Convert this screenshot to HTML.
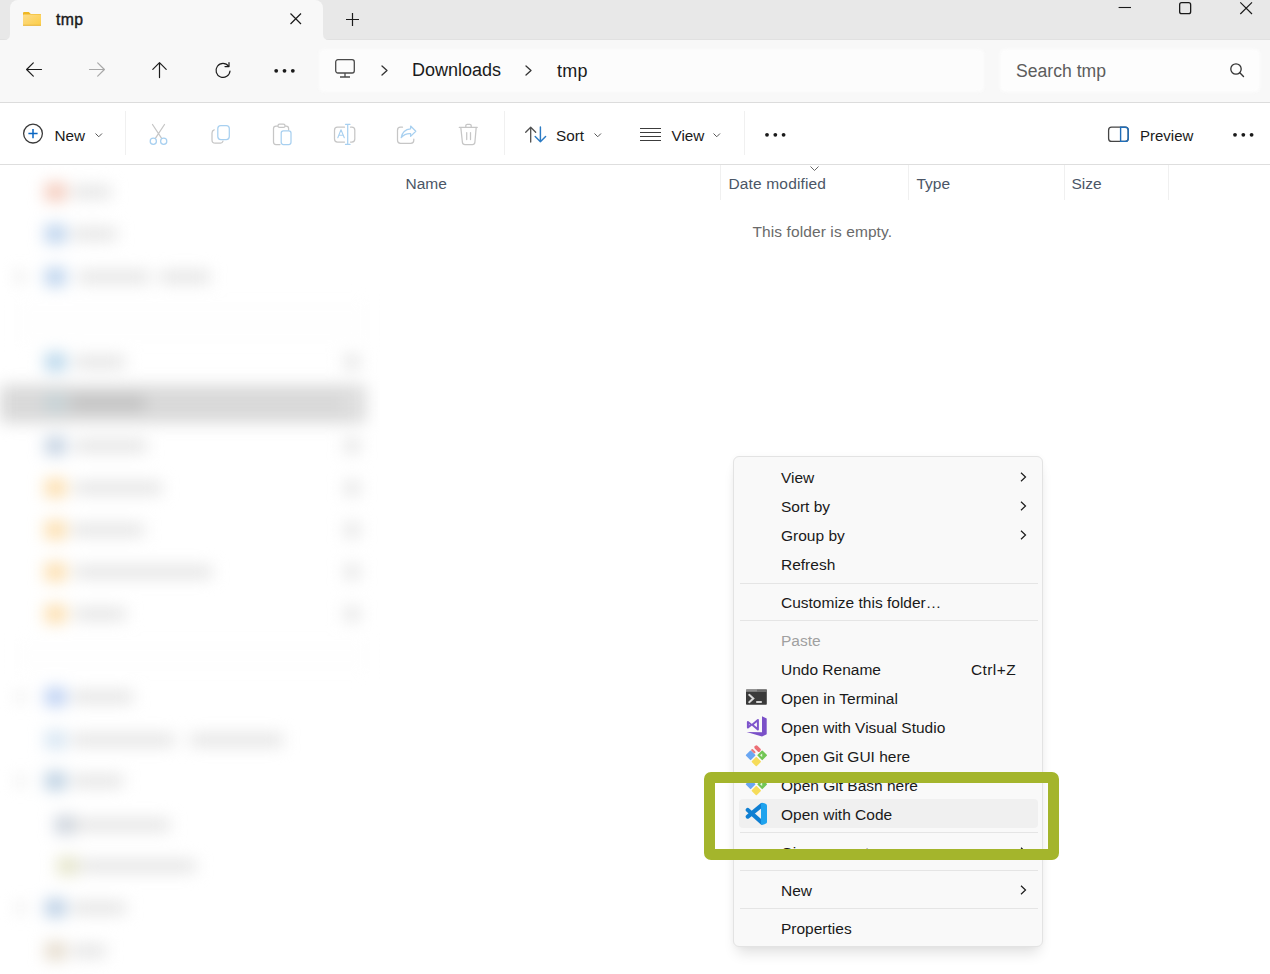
<!DOCTYPE html>
<html><head><meta charset="utf-8"><style>
*{margin:0;padding:0;box-sizing:border-box}
html,body{width:1270px;height:974px;overflow:hidden;background:#fff;font-family:"Liberation Sans",sans-serif;color:#1a1a1a}
.a{position:absolute}
.t{position:absolute;white-space:nowrap;line-height:1}
svg{position:absolute;overflow:visible}
</style></head><body>
<div class="a" style="left:0;top:0;width:1270px;height:40px;background:#e8e8e8"></div>
<div class="a" style="left:0;top:39px;width:1270px;height:1px;background:#e1e1e1"></div>
<div class="a" style="left:10px;top:0;width:313px;height:40px;background:#f8f8f8;border-radius:8px 8px 0 0"></div>
<svg width="1270" height="60" style="left:0;top:0"><path d="M4 40 Q10 40 10 34 L10 40 Z M323 34 Q323 40 329 40 L323 40 Z" fill="#f8f8f8"/></svg>
<svg width="1270" height="974" style="left:0;top:0"><defs><linearGradient id="fg" x1="0" y1="0" x2="1" y2="1"><stop offset="0" stop-color="#fddc8a"/><stop offset="1" stop-color="#fccd45"/></linearGradient></defs><path d="M23 13 Q23 11.9 24.1 11.9 L28.8 11.9 L30.8 14 L40.2 14 Q41 14 41 14.8 L41 16.5 L23 16.5 Z" fill="#efb722"/><rect x="23" y="14.6" width="18" height="11.2" rx="0.8" fill="url(#fg)"/><rect x="23" y="24.7" width="18" height="1.1" fill="#e9b848"/></svg>
<div class="t" style="left:56px;top:12.42px;font-size:15.8px;color:#1a1a1a;-webkit-text-stroke:0.4px #1a1a1a;letter-spacing:0.3px;">tmp</div>

<svg width="12" height="12" style="left:289.5px;top:13px"><path d="M0.5 0.5 L11 11 M11 0.5 L0.5 11" stroke="#1a1a1a" stroke-width="1.2" fill="none"/></svg>
<svg width="14" height="14" style="left:346px;top:13px"><path d="M6.5 0 L6.5 13 M0 6.5 L13 6.5" stroke="#1a1a1a" stroke-width="1.2" fill="none"/></svg>
<svg width="1270" height="974" style="left:0;top:0"><path d="M1118.6 7.5 L1131 7.5" stroke="#1a1a1a" stroke-width="1.1"/></svg>
<svg width="14" height="14" style="left:1179px;top:2px"><rect x="0.65" y="0.65" width="11" height="11" rx="2" stroke="#1a1a1a" stroke-width="1.3" fill="none"/></svg>
<svg width="14" height="14" style="left:1240px;top:2px"><path d="M0.3 0.3 L12 12 M12 0.3 L0.3 12" stroke="#1a1a1a" stroke-width="1.15" fill="none"/></svg>
<div class="a" style="left:0;top:40px;width:1270px;height:62px;background:#f8f8f8"></div>
<div class="a" style="left:0;top:102px;width:1270px;height:1px;background:#dcdcdc"></div>
<div class="a" style="left:319px;top:49px;width:665px;height:43px;background:#fcfcfc;border-radius:5px;filter:blur(1.5px)"></div>
<div class="a" style="left:1000px;top:49px;width:260px;height:43px;background:#fdfdfd;border-radius:5px;filter:blur(1.5px)"></div>
<svg width="20" height="20" style="left:26px;top:62px"><path d="M0.6 7.5 L15.5 7.5 M7.3 0.8 L0.6 7.5 L7.3 14.2" stroke="#1c1c1c" stroke-width="1.2" fill="none" stroke-linecap="round" stroke-linejoin="round"/></svg>
<svg width="20" height="20" style="left:89px;top:62px"><path d="M15.4 7.5 L0.5 7.5 M8.7 0.8 L15.4 7.5 L8.7 14.2" stroke="#a8a8a8" stroke-width="1.2" fill="none" stroke-linecap="round" stroke-linejoin="round"/></svg>
<svg width="20" height="20" style="left:152px;top:62px"><path d="M7.5 0.6 L7.5 15.6 M0.8 7.3 L7.5 0.6 L14.2 7.3" stroke="#1c1c1c" stroke-width="1.2" fill="none" stroke-linecap="round" stroke-linejoin="round"/></svg>
<svg width="20" height="20" style="left:215px;top:62px"><path d="M13.6 4.2 A7 7 0 1 0 15 9" stroke="#1c1c1c" stroke-width="1.2" fill="none" stroke-linecap="round" stroke-linejoin="round"/><path d="M14 0.6 L14 4.6 L10 4.6" stroke="#1c1c1c" stroke-width="1.2" fill="none" stroke-linecap="round" stroke-linejoin="round"/></svg>
<svg width="24" height="6" style="left:273px;top:68px"><circle cx="3.2" cy="2.8" r="1.9" fill="#1a1a1a"/><circle cx="11.5" cy="2.8" r="1.9" fill="#1a1a1a"/><circle cx="19.8" cy="2.8" r="1.9" fill="#1a1a1a"/></svg>
<svg width="22" height="22" style="left:335px;top:59px"><rect x="0.7" y="0.7" width="18.6" height="13.3" rx="2.2" stroke="#4a4a4a" stroke-width="1.3" fill="none"/><path d="M10 14 L10 17.5 M5 18 L15 18" stroke="#4a4a4a" stroke-width="1.3" fill="none"/></svg>
<svg width="10" height="12" style="left:381px;top:65px"><path d="M1 1 L6 5.5 L1 10" stroke="#333" stroke-width="1.3" fill="none" stroke-linecap="round" stroke-linejoin="round"/></svg>
<div class="t" style="left:412px;top:60.96px;font-size:18px;color:#1a1a1a;">Downloads</div>

<svg width="10" height="12" style="left:525px;top:65px"><path d="M1 1 L6 5.5 L1 10" stroke="#333" stroke-width="1.3" fill="none" stroke-linecap="round" stroke-linejoin="round"/></svg>
<div class="t" style="left:557px;top:61.96px;font-size:18px;color:#1a1a1a;letter-spacing:0.3px;">tmp</div>

<div class="t" style="left:1016px;top:63.10px;font-size:17.6px;color:#5c5c5c;">Search tmp</div>

<svg width="16" height="16" style="left:1229.5px;top:62.5px"><circle cx="6" cy="6" r="5.2" stroke="#333" stroke-width="1.3" fill="none"/><path d="M9.8 9.8 L13.5 13.5" stroke="#333" stroke-width="1.4" stroke-linecap="round"/></svg>
<div class="a" style="left:0;top:164px;width:1270px;height:1px;background:#dedede"></div>
<div class="a" style="left:125px;top:111px;width:1px;height:44px;background:#f0f0f0"></div>
<div class="a" style="left:503.5px;top:111px;width:1px;height:44px;background:#f0f0f0"></div>
<div class="a" style="left:744px;top:111px;width:1px;height:44px;background:#f0f0f0"></div>
<svg width="22" height="22" style="left:22px;top:123px"><circle cx="11" cy="10.6" r="9.4" stroke="#3a3a3a" stroke-width="1.3" fill="none"/><path d="M11 6 L11 15.2 M6.4 10.6 L15.6 10.6" stroke="#0a66c2" stroke-width="1.5"/></svg>
<div class="t" style="left:54.5px;top:128.05px;font-size:15.3px;">New</div>

<svg width="10" height="6" style="left:95px;top:133px"><path d="M0.5 0.5 L3.75 3.75 L7 0.5" stroke="#555" stroke-width="1" fill="none"/></svg>
<svg width="1270" height="974" style="left:0;top:0"><path d="M152.5 124.5 L161.8 138.6 M164.5 124.5 L155.2 138.6" stroke="#c6c6c6" stroke-width="1.25" fill="none" stroke-linecap="round" stroke-linejoin="round"/><circle cx="153.3" cy="141.2" r="3.1" stroke="#a8d0f0" stroke-width="1.25" fill="none" stroke-linecap="round" stroke-linejoin="round"/><circle cx="163.7" cy="141.2" r="3.1" stroke="#a8d0f0" stroke-width="1.25" fill="none" stroke-linecap="round" stroke-linejoin="round"/><path d="M214.2 129.8 Q212 130.5 212 133 L212 140 Q212 143.2 215.2 143.2 L220.5 143.2 Q222.5 143.2 223 141.2" stroke="#c6c6c6" stroke-width="1.25" fill="none" stroke-linecap="round" stroke-linejoin="round"/><rect x="217.8" y="125.5" width="11.5" height="14" rx="3" stroke="#a8d0f0" stroke-width="1.25" fill="none" stroke-linecap="round" stroke-linejoin="round"/><path d="M277.5 126 L276 126 Q273.5 126 273.5 128.5 L273.5 142 Q273.5 144.5 276 144.5 L280 144.5 M285.5 126 L286.2 126 Q288.6 126 288.6 128.5 L288.6 130" stroke="#c6c6c6" stroke-width="1.25" fill="none" stroke-linecap="round" stroke-linejoin="round"/><rect x="278" y="124.2" width="7" height="3.2" rx="1.5" stroke="#c6c6c6" stroke-width="1.25" fill="none" stroke-linecap="round" stroke-linejoin="round"/><rect x="281.2" y="130.8" width="9.8" height="13.7" rx="2.2" stroke="#a8d0f0" stroke-width="1.25" fill="none" stroke-linecap="round" stroke-linejoin="round"/><path d="M344.5 127.2 L337.5 127.2 Q334.5 127.2 334.5 130.2 L334.5 139 Q334.5 142 337.5 142 L344.5 142 M350.5 127.2 L351.8 127.2 Q354.8 127.2 354.8 130.2 L354.8 139 Q354.8 142 351.8 142 L350.5 142" stroke="#c6c6c6" stroke-width="1.25" fill="none" stroke-linecap="round" stroke-linejoin="round"/><path d="M347.7 124.3 L347.7 144.4 M345.5 124.3 L350 124.3 M345.5 144.4 L350 144.4" stroke="#a8d0f0" stroke-width="1.25" fill="none" stroke-linecap="round" stroke-linejoin="round"/><path d="M337.8 137.8 L341 129.8 L344.3 137.8 M339 135.3 L343.1 135.3" stroke="#a8d0f0" stroke-width="1.1" fill="none" stroke-linecap="round" stroke-linejoin="round"/><path d="M402.5 127.2 L400.5 127.2 Q397.5 127.2 397.5 130.2 L397.5 140.3 Q397.5 143.3 400.5 143.3 L410.8 143.3 Q413.8 143.3 413.8 140.3 L413.8 139" stroke="#c6c6c6" stroke-width="1.25" fill="none" stroke-linecap="round" stroke-linejoin="round"/><path d="M410.6 126 L415.8 131.3 L410.6 136.4 L410.6 133.6 Q404.5 133.3 401.2 137.7 Q402.5 129.5 410.6 128.8 Z" stroke="#a8d0f0" stroke-width="1.25" fill="none" stroke-linecap="round" stroke-linejoin="round"/><path d="M459.3 127.4 L477.2 127.4 M465.8 127.4 L465.8 125.6 Q465.8 124.3 467.3 124.3 L469.7 124.3 Q471.2 124.3 471.2 125.6 L471.2 127.4 M460.8 127.4 L462.4 142.3 Q462.7 144.5 465 144.5 L472.4 144.5 Q474.6 144.5 474.9 142.3 L476.2 127.4 M466.7 132.6 L466.7 139.6 M470.5 132.6 L470.5 139.6" stroke="#c6c6c6" stroke-width="1.25" fill="none" stroke-linecap="round" stroke-linejoin="round"/><path d="M530.7 142 L530.7 127.3 M525.7 132.2 L530.7 127.2 L535.7 132.2" stroke="#505050" stroke-width="1.3" fill="none" stroke-linecap="round" stroke-linejoin="round"/><path d="M540.4 127 L540.4 141.8 M535.2 136.6 L540.4 141.8 L545.6 136.6" stroke="#2b7bc4" stroke-width="1.45" fill="none" stroke-linecap="round" stroke-linejoin="round"/><path d="M640 128.5 L661 128.5 M640 132.5 L661 132.5 M640 136.5 L661 136.5 M640 140.5 L661 140.5" stroke="#3c3c3c" stroke-width="1.2"/></svg>
<div class="t" style="left:556px;top:128.05px;font-size:15.3px;">Sort</div>

<svg width="10" height="6" style="left:594px;top:133px"><path d="M0.5 0.5 L3.75 3.75 L7 0.5" stroke="#555" stroke-width="1" fill="none"/></svg>
<div class="t" style="left:671.5px;top:128.05px;font-size:15.3px;">View</div>

<svg width="10" height="6" style="left:713px;top:133px"><path d="M0.5 0.5 L3.75 3.75 L7 0.5" stroke="#555" stroke-width="1" fill="none"/></svg>
<svg width="24" height="6" style="left:764px;top:132px"><circle cx="3" cy="2.8" r="1.9" fill="#1a1a1a"/><circle cx="11.3" cy="2.8" r="1.9" fill="#1a1a1a"/><circle cx="19.6" cy="2.8" r="1.9" fill="#1a1a1a"/></svg>
<svg width="1270" height="974" style="left:0;top:0"><rect x="1108.6" y="127.2" width="19.6" height="14.2" rx="3" stroke="#444" stroke-width="1.3" fill="none"/><path d="M1120.6 127.2 L1125.2 127.2 Q1128.2 127.2 1128.2 130.2 L1128.2 138.4 Q1128.2 141.4 1125.2 141.4 L1120.6 141.4 Z" stroke="#1f6db8" stroke-width="1.4" fill="none"/></svg>
<div class="t" style="left:1140px;top:128.30px;font-size:15.0px;">Preview</div>

<svg width="24" height="6" style="left:1232px;top:132px"><circle cx="3" cy="2.8" r="1.9" fill="#1a1a1a"/><circle cx="11.3" cy="2.8" r="1.9" fill="#1a1a1a"/><circle cx="19.6" cy="2.8" r="1.9" fill="#1a1a1a"/></svg>
<div class="t" style="left:405.5px;top:175.88px;font-size:15.5px;color:#4b5666;">Name</div>

<div class="t" style="left:728.5px;top:175.88px;font-size:15.5px;color:#4b5666;letter-spacing:0.15px;">Date modified</div>

<div class="t" style="left:916.5px;top:175.88px;font-size:15.5px;color:#4b5666;">Type</div>

<div class="t" style="left:1071.5px;top:175.88px;font-size:15.5px;color:#4b5666;">Size</div>

<div class="a" style="left:720px;top:165px;width:1px;height:35px;background:#f0f0f0"></div>
<div class="a" style="left:908px;top:165px;width:1px;height:35px;background:#f0f0f0"></div>
<div class="a" style="left:1064px;top:165px;width:1px;height:35px;background:#f0f0f0"></div>
<div class="a" style="left:1168px;top:165px;width:1px;height:35px;background:#f0f0f0"></div>
<svg width="12" height="6" style="left:810px;top:166px"><path d="M0.5 0.5 L4.5 4.5 L8.5 0.5" stroke="#666" stroke-width="1" fill="none"/></svg>
<div class="t" style="left:752.5px;top:224.48px;font-size:15.5px;color:#6a6a6a;letter-spacing:0.1px;">This folder is empty.</div>

<div class="a" style="left:0;top:166px;width:380px;height:808px;overflow:hidden"><div class="a" style="left:0;top:-166px;width:380px;height:974px;filter:blur(8px)"><div class="a" style="left:0px;top:385px;width:366px;height:38px;background:#d9d9d9;border-radius:4px"></div><div class="a" style="left:14px;top:302px;width:356px;height:42px;background:#fefefe"></div><div class="a" style="left:14px;top:641px;width:356px;height:30px;background:#fefefe"></div><div class="a" style="left:45px;top:183px;width:21px;height:18px;border-radius:3px;background:#f4c8b8"></div><div class="a" style="left:72px;top:186px;width:39px;height:12px;background:#e2e2e2;border-radius:2px"></div><div class="a" style="left:45px;top:225px;width:21px;height:18px;border-radius:3px;background:#b8d0ec"></div><div class="a" style="left:72px;top:228px;width:45px;height:12px;background:#e2e2e2;border-radius:2px"></div><div class="a" style="left:45px;top:268px;width:21px;height:18px;border-radius:3px;background:#b8d0ec"></div><div class="a" style="left:78px;top:271px;width:72px;height:12px;background:#e2e2e2;border-radius:2px"></div><div class="a" style="left:160px;top:271px;width:50px;height:12px;background:#e2e2e2"></div><div class="a" style="left:16px;top:272px;width:8px;height:10px;background:#e0e0e0"></div><div class="a" style="left:45px;top:353px;width:21px;height:18px;border-radius:3px;background:#b4d4ea"></div><div class="a" style="left:74px;top:356px;width:51px;height:12px;background:#e2e2e2;border-radius:2px"></div><div class="a" style="left:344px;top:355px;width:16px;height:14px;background:#e4e4e4"></div><div class="a" style="left:45px;top:394px;width:21px;height:18px;border-radius:3px;background:#c4d2d6"></div><div class="a" style="left:70px;top:397px;width:75px;height:12px;background:#bdbdbd;border-radius:2px"></div><div class="a" style="left:344px;top:396px;width:16px;height:14px;background:#e4e4e4"></div><div class="a" style="left:45px;top:437px;width:21px;height:18px;border-radius:3px;background:#c0cfe0"></div><div class="a" style="left:74px;top:440px;width:73px;height:12px;background:#e2e2e2;border-radius:2px"></div><div class="a" style="left:344px;top:439px;width:16px;height:14px;background:#e4e4e4"></div><div class="a" style="left:45px;top:479px;width:21px;height:18px;border-radius:3px;background:#fcdca8"></div><div class="a" style="left:74px;top:482px;width:88px;height:12px;background:#e2e2e2;border-radius:2px"></div><div class="a" style="left:344px;top:481px;width:16px;height:14px;background:#e4e4e4"></div><div class="a" style="left:45px;top:521px;width:21px;height:18px;border-radius:3px;background:#fcdca8"></div><div class="a" style="left:72px;top:524px;width:72px;height:12px;background:#e2e2e2;border-radius:2px"></div><div class="a" style="left:344px;top:523px;width:16px;height:14px;background:#e4e4e4"></div><div class="a" style="left:45px;top:563px;width:21px;height:18px;border-radius:3px;background:#fcdca8"></div><div class="a" style="left:74px;top:566px;width:138px;height:12px;background:#e2e2e2;border-radius:2px"></div><div class="a" style="left:344px;top:565px;width:16px;height:14px;background:#e4e4e4"></div><div class="a" style="left:45px;top:605px;width:21px;height:18px;border-radius:3px;background:#fcdca8"></div><div class="a" style="left:74px;top:608px;width:52px;height:12px;background:#e2e2e2;border-radius:2px"></div><div class="a" style="left:344px;top:607px;width:16px;height:14px;background:#e4e4e4"></div><div class="a" style="left:45px;top:688px;width:21px;height:18px;border-radius:3px;background:#b8cdf2"></div><div class="a" style="left:72px;top:691px;width:61px;height:12px;background:#e2e2e2;border-radius:2px"></div><div class="a" style="left:17px;top:692px;width:7px;height:10px;background:#e2e2e2"></div><div class="a" style="left:17px;top:776px;width:7px;height:10px;background:#e2e2e2"></div><div class="a" style="left:17px;top:903px;width:7px;height:10px;background:#e2e2e2"></div><div class="a" style="left:45px;top:731px;width:21px;height:18px;border-radius:3px;background:#d4e4f2"></div><div class="a" style="left:72px;top:734px;width:103px;height:12px;background:#e2e2e2;border-radius:2px"></div><div class="a" style="left:190px;top:734px;width:93px;height:12px;background:#e2e2e2"></div><div class="a" style="left:45px;top:772px;width:21px;height:18px;border-radius:3px;background:#b8cde0"></div><div class="a" style="left:72px;top:775px;width:51px;height:12px;background:#e2e2e2;border-radius:2px"></div><div class="a" style="left:55px;top:816px;width:21px;height:18px;border-radius:3px;background:#c8d0da"></div><div class="a" style="left:72px;top:819px;width:98px;height:12px;background:#e2e2e2;border-radius:2px"></div><div class="a" style="left:57px;top:857px;width:21px;height:18px;border-radius:3px;background:#e4e4c8"></div><div class="a" style="left:80px;top:860px;width:116px;height:12px;background:#e2e2e2;border-radius:2px"></div><div class="a" style="left:45px;top:899px;width:21px;height:18px;border-radius:3px;background:#b8cde4"></div><div class="a" style="left:72px;top:902px;width:54px;height:12px;background:#e2e2e2;border-radius:2px"></div><div class="a" style="left:45px;top:942px;width:21px;height:18px;border-radius:3px;background:#e4dacb"></div><div class="a" style="left:72px;top:945px;width:34px;height:12px;background:#e2e2e2;border-radius:2px"></div></div></div>
<div class="a" style="left:733px;top:456px;width:310px;height:491px;background:#f9f9f9;border:1px solid #e3e3e3;border-radius:6px;box-shadow:0 10px 14px -4px rgba(0,0,0,0.12),0 0 6px rgba(0,0,0,0.03)"></div>
<div class="t" style="left:781px;top:470.18px;font-size:15.5px;color:#1a1a1a;">View</div>

<svg width="8" height="11" style="left:1019.5px;top:471.5px"><path d="M1 0.8 L5.5 5 L1 9.2" stroke="#1a1a1a" stroke-width="1.2" fill="none"/></svg>
<div class="t" style="left:781px;top:499.18px;font-size:15.5px;color:#1a1a1a;">Sort by</div>

<svg width="8" height="11" style="left:1019.5px;top:500.5px"><path d="M1 0.8 L5.5 5 L1 9.2" stroke="#1a1a1a" stroke-width="1.2" fill="none"/></svg>
<div class="t" style="left:781px;top:528.18px;font-size:15.5px;color:#1a1a1a;">Group by</div>

<svg width="8" height="11" style="left:1019.5px;top:529.5px"><path d="M1 0.8 L5.5 5 L1 9.2" stroke="#1a1a1a" stroke-width="1.2" fill="none"/></svg>
<div class="t" style="left:781px;top:557.48px;font-size:15.5px;color:#1a1a1a;">Refresh</div>

<div class="a" style="left:740px;top:582.5px;width:298px;height:1px;background:#e5e5e5"></div>
<div class="t" style="left:781px;top:595.18px;font-size:15.5px;color:#1a1a1a;">Customize this folder&hellip;</div>

<div class="a" style="left:740px;top:620px;width:298px;height:1px;background:#e5e5e5"></div>
<div class="t" style="left:781px;top:632.98px;font-size:15.5px;color:#a0a0a0;">Paste</div>

<div class="t" style="left:781px;top:662.08px;font-size:15.5px;color:#1a1a1a;">Undo Rename</div>

<div class="t" style="left:971px;top:662.08px;font-size:15.5px;letter-spacing:0.4px;">Ctrl+Z</div>

<div class="t" style="left:781px;top:691.08px;font-size:15.5px;color:#1a1a1a;">Open in Terminal</div>

<div class="t" style="left:781px;top:720.08px;font-size:15.5px;color:#1a1a1a;">Open with Visual Studio</div>

<div class="t" style="left:781px;top:749.08px;font-size:15.5px;color:#1a1a1a;">Open Git GUI here</div>

<div class="t" style="left:781px;top:778.08px;font-size:15.5px;color:#1a1a1a;">Open Git Bash here</div>

<div class="a" style="left:738.5px;top:799px;width:299px;height:29px;background:#f0f0f0;border-radius:4px"></div>
<div class="t" style="left:781px;top:807.18px;font-size:15.5px;color:#1a1a1a;">Open with Code</div>

<div class="a" style="left:740px;top:831.5px;width:298px;height:1px;background:#e5e5e5"></div>
<div class="t" style="left:781px;top:845.18px;font-size:15.5px;color:#1a1a1a;letter-spacing:-0.4px;">Give access to</div>

<svg width="8" height="11" style="left:1019.5px;top:846.5px"><path d="M1 0.8 L5.5 5 L1 9.2" stroke="#1a1a1a" stroke-width="1.2" fill="none"/></svg>
<div class="a" style="left:740px;top:870px;width:298px;height:1px;background:#e5e5e5"></div>
<div class="t" style="left:781px;top:883.38px;font-size:15.5px;color:#1a1a1a;">New</div>

<svg width="8" height="11" style="left:1019.5px;top:884.5px"><path d="M1 0.8 L5.5 5 L1 9.2" stroke="#1a1a1a" stroke-width="1.2" fill="none"/></svg>
<div class="a" style="left:740px;top:908px;width:298px;height:1px;background:#e5e5e5"></div>
<div class="t" style="left:781px;top:921.48px;font-size:15.5px;color:#1a1a1a;">Properties</div>

<svg width="1270" height="974" style="left:0;top:0"><rect x="746" y="689.6" width="20.8" height="15.2" rx="0.8" fill="#3a3a3a"/><rect x="746" y="689.6" width="20.8" height="2.2" fill="#8a8a8a"/><rect x="757" y="689.6" width="9.8" height="2.2" fill="#6a6a6a"/><path d="M749.2 694.8 L753.3 698.5 L749.2 702.2" stroke="#d8d8d8" stroke-width="2" fill="none" stroke-linecap="round"/><path d="M756.2 702 L761.8 702" stroke="#e8e8e8" stroke-width="1.8"/></svg>
<svg width="1270" height="974" style="left:0;top:0"><path d="M762 716.3 L766.7 718.6 L766.7 734.3 L762 736.6 L746.6 732 L762 732.2 Z" fill="#7a50c8"/><path d="M747.9 721.9 L751.3 724.7 L747.9 727.5 Z M752.3 724.7 L757.9 720 L757.9 729.4 Z" stroke="#7e55cc" stroke-width="2" stroke-linejoin="round" fill="none"/></svg>
<svg width="1270" height="974" style="left:0;top:0"><path d="M750.6 751.3 L754.6 755.3 L750.6 759.3 L746.6 755.3 Z" fill="#6aa6f2" stroke="#6aa6f2" stroke-width="1.6" stroke-linejoin="round"/><path d="M762.2 751.3 L766.2 755.3 L762.2 759.3 L758.2 755.3 Z" fill="#72c655" stroke="#72c655" stroke-width="1.6" stroke-linejoin="round"/><path d="M756.3 757.8000000000001 L760.0999999999999 761.6 L756.3 765.4 L752.5 761.6 Z" fill="#f6dc5a" stroke="#f6dc5a" stroke-width="1.6" stroke-linejoin="round"/><rect x="-3.6" y="-1.9" width="7.2" height="3.8" rx="1.5" fill="#ec6e74" transform="translate(757.6 748.6) rotate(45)"/><rect x="-2.6" y="-1.1" width="5.2" height="2.2" rx="1" fill="#e87a80" transform="translate(753.3 751.2) rotate(45)"/><path d="M760 755.3 L762.2 753.5 L762.2 757.1 Z" fill="#e8f6e0"/></svg>
<svg width="1270" height="974" style="left:0;top:0"><path d="M750.6 780.3 L754.6 784.3 L750.6 788.3 L746.6 784.3 Z" fill="#6aa6f2" stroke="#6aa6f2" stroke-width="1.6" stroke-linejoin="round"/><path d="M762.2 780.3 L766.2 784.3 L762.2 788.3 L758.2 784.3 Z" fill="#72c655" stroke="#72c655" stroke-width="1.6" stroke-linejoin="round"/><path d="M756.3 786.8000000000001 L760.0999999999999 790.6 L756.3 794.4 L752.5 790.6 Z" fill="#f6dc5a" stroke="#f6dc5a" stroke-width="1.6" stroke-linejoin="round"/><rect x="-3.6" y="-1.9" width="7.2" height="3.8" rx="1.5" fill="#ec6e74" transform="translate(757.6 777.6) rotate(45)"/><rect x="-2.6" y="-1.1" width="5.2" height="2.2" rx="1" fill="#e87a80" transform="translate(753.3 780.2) rotate(45)"/><path d="M760 784.3 L762.2 782.5 L762.2 786.1 Z" fill="#e8f6e0"/></svg>
<svg width="1270" height="974" style="left:0;top:0"><path d="M762 805 L747.8 816.6 M762 822.6 L747.8 810" stroke="#0f7fd2" stroke-width="4.2" stroke-linecap="round" fill="none"/><path d="M761 803.6 Q762.5 802.4 764.5 803.2 L766 803.9 Q767 804.5 767 805.7 L767 821.9 Q767 823.1 766 823.6 L764.5 824.3 Q762.5 825.1 761 823.9 Z" fill="#1fa3ee"/></svg>
<div class="a" style="left:704px;top:772px;width:355px;height:88px;border:11px solid #a4b52c;border-radius:7px"></div>
</body></html>
